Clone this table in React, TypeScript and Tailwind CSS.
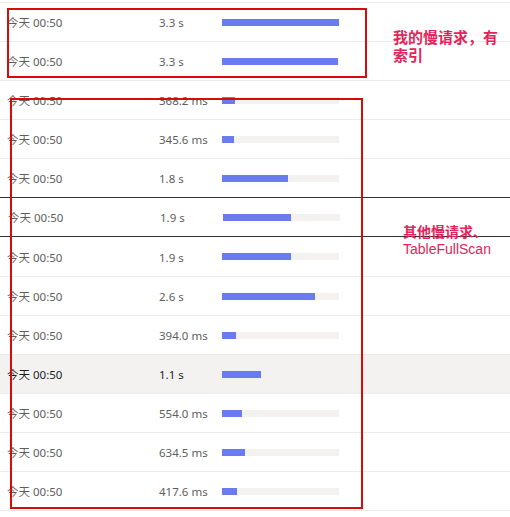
const rows = [
  { time: "今天 00:50", dur: "3.3 s", w: 117 },
  { time: "今天 00:50", dur: "3.3 s", w: 116 },
  { time: "今天 00:50", dur: "368.2 ms", w: 13 },
  { time: "今天 00:50", dur: "345.6 ms", w: 12 },
  { time: "今天 00:50", dur: "1.8 s", w: 66 },
  { time: "今天 00:50", dur: "1.9 s", w: 68, dragged: true },
  { time: "今天 00:50", dur: "1.9 s", w: 69 },
  { time: "今天 00:50", dur: "2.6 s", w: 93 },
  { time: "今天 00:50", dur: "394.0 ms", w: 14 },
  { time: "今天 00:50", dur: "1.1 s", w: 39, hover: true },
  { time: "今天 00:50", dur: "554.0 ms", w: 20 },
  { time: "今天 00:50", dur: "634.5 ms", w: 23 },
  { time: "今天 00:50", dur: "417.6 ms", w: 15 },
];

function rowClass(i: number) {
  const r = rows[i];
  if (r.dragged) return "h-[40px] border-y border-[#333333] pl-px text-[#605e5c]";
  if (r.hover) return "h-[39px] border-t border-[#edebe9] bg-[#f3f2f1] text-[#201f1e]";
  if (i === rows.length - 1) return "h-[40px] border-y border-[#edebe9] text-[#605e5c]";
  if (rows[i - 1]?.dragged) return "h-[39px] text-[#605e5c]";
  return "h-[39px] border-t border-[#edebe9] text-[#605e5c]";
}

export default function App() {
  return (
    <div className="relative w-[510px] h-[517px] bg-white overflow-hidden font-['Noto_Sans','Noto_Sans_CJK_SC',sans-serif] text-[11.5px]">
      {/* Rows */}
      <div className="pt-[2px]">
        {rows.map((r, i) => (
          <div key={i} className={"flex items-center " + rowClass(i)}>
            <div className="w-[159px] pl-[7px] pt-[2px] whitespace-nowrap">{r.time}</div>
            <div className="w-[63px] pt-[2px] whitespace-nowrap">{r.dur}</div>
            <div className="w-[117px] h-[7px] bg-[#f3f2f1]">
              <div className="h-full bg-[#6a7bf0]" style={{ width: r.w }} />
            </div>
          </div>
        ))}
      </div>

      {/* Annotations */}
      <div className="absolute left-[7px] top-[8px] w-[360px] h-[70px] border-2 border-[#d80b0b]" />
      <div className="absolute left-[10px] top-[98px] w-[353px] h-[411px] border-2 border-[#d80b0b]" />

      <div className="absolute left-[393px] top-[28px] flex flex-col text-[15px] leading-[18px] font-bold text-[#e3245a] font-['Noto_Sans_CJK_SC',sans-serif]">
        <span>我的慢请求，有</span>
        <span>索引</span>
      </div>
      <div className="absolute left-[403px] top-[222px] flex flex-col text-[14px] leading-[18px] font-bold text-[#e3245a] font-['Noto_Sans_CJK_SC',sans-serif]">
        <span>其他慢请求、</span>
        <span className="font-['Liberation_Sans',sans-serif] font-normal">TableFullScan</span>
      </div>
    </div>
  );
}
